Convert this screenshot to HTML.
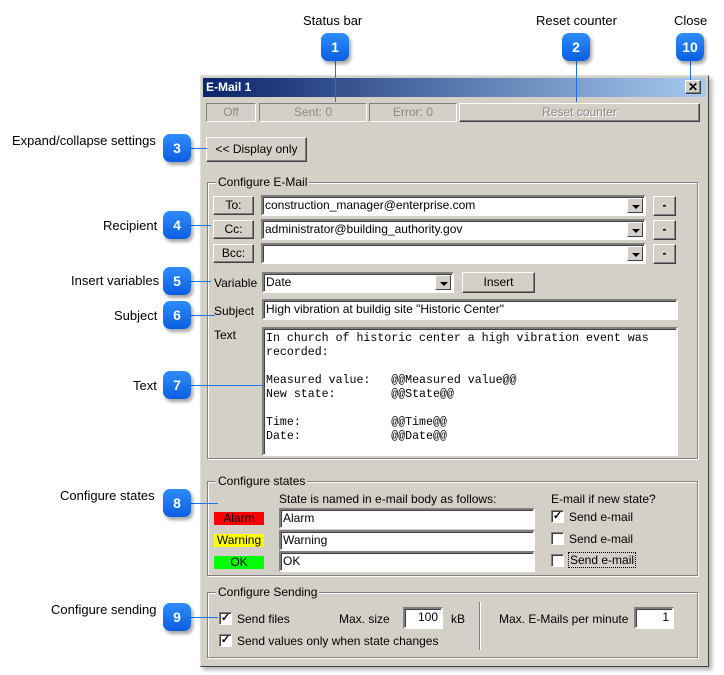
<!DOCTYPE html>
<html><head><style>
*{box-sizing:border-box;margin:0;padding:0}
body{width:724px;height:675px;background:#fff;position:relative;font-family:"Liberation Sans",sans-serif;font-size:12px;color:#000;overflow:hidden}
.a{position:absolute}
.lbl{position:absolute;font-size:13px;color:#000;white-space:nowrap}
.badge{position:absolute;width:28px;height:28px;border-radius:7px;background:linear-gradient(#2f8cff,#0a5fe0);color:#fff;font-weight:bold;font-size:14px;text-align:center;line-height:28px;box-shadow:2px 3px 3px rgba(0,0,0,.35)}
.ln{position:absolute;background:#1a73e8}
.win{position:absolute;left:200px;top:75px;width:509px;height:592px;background:#d4d0c8;border:1px solid;border-color:#dfdfdf #404040 #404040 #dfdfdf;box-shadow:3px 3px 4px rgba(0,0,0,.3)}
.title{position:absolute;left:2px;top:2px;right:2px;height:19px;background:linear-gradient(90deg,#0a246a,#a6caf0);color:#fff;font-weight:bold;font-size:12px;line-height:19px;padding-left:3px}
.btn{position:absolute;background:#d4d0c8;border:1px solid;border-color:#fff #404040 #404040 #fff;box-shadow:inset -1px -1px 0 #808080;text-align:center;font-size:12px}
.dis{color:#8a8a8a;text-shadow:1px 1px 0 #fff}
.sunk{position:absolute;border:1px solid;border-color:#808080 #fff #fff #808080;color:#8a8a8a;text-align:center;font-size:12px}
.inp{position:absolute;background:#fff;border:2px solid;border-color:#808080 #fff #fff #808080;box-shadow:inset 1px 1px 0 #404040;font-size:12px;padding-left:2px;white-space:nowrap;overflow:hidden}
.dd{position:absolute;right:1px;top:1px;width:16px;bottom:1px;background:#d4d0c8;border:1px solid;border-color:#fff #404040 #404040 #fff}
.dd:after{content:"";position:absolute;left:4px;top:6px;border:4px solid transparent;border-top:4px solid #000;border-bottom:0}
.grp{position:absolute;border:1px solid #808080;box-shadow:1px 1px 0 #fff,inset 1px 1px 0 #fff}
.gt{position:absolute;top:-8px;left:8px;background:#d4d0c8;padding:0 2px;font-size:12px}
.cb{position:absolute;width:13px;height:13px;background:#fff;border:1px solid;border-color:#808080 #fff #fff #808080;box-shadow:inset 1px 1px 0 #404040;font-size:11px;line-height:11px;text-align:center;font-weight:bold}
</style></head><body>

<div class="lbl" style="left:303px;top:13px">Status bar</div>
<div class="lbl" style="left:536px;top:13px">Reset counter</div>
<div class="lbl" style="left:674px;top:13px">Close</div>
<div class="lbl" style="left:12px;top:133px">Expand/collapse settings</div>
<div class="lbl" style="left:103px;top:218px">Recipient</div>
<div class="lbl" style="left:71px;top:273px">Insert variables</div>
<div class="lbl" style="left:114px;top:308px">Subject</div>
<div class="lbl" style="left:133px;top:378px">Text</div>
<div class="lbl" style="left:60px;top:488px">Configure states</div>
<div class="lbl" style="left:51px;top:602px">Configure sending</div>

<div class="win">
 <div class="title">E-Mail 1</div>
 <div class="btn" style="left:484px;top:4px;width:16px;height:14px;font-weight:bold;font-size:12px;line-height:12px">✕</div>
 <div class="sunk" style="left:5px;top:27px;width:50px;height:19px;line-height:17px">Off</div>
 <div class="sunk" style="left:58px;top:27px;width:108px;height:19px;line-height:17px">Sent: 0</div>
 <div class="sunk" style="left:168px;top:27px;width:88px;height:19px;line-height:17px">Error: 0</div>
 <div class="btn dis" style="left:258px;top:27px;width:241px;height:19px;line-height:17px">Reset counter</div>
 <div class="btn" style="left:5px;top:61px;width:101px;height:25px;line-height:23px">&lt;&lt; Display only</div>

 <div class="grp" style="left:6px;top:106px;width:491px;height:277px"><div class="gt">Configure E-Mail</div></div>
 <div class="btn" style="left:12px;top:120px;width:41px;height:19px;line-height:17px">To:</div>
 <div class="inp" style="left:60px;top:119px;width:385px;height:21px;line-height:16px">construction_manager@enterprise.com<div class="dd"></div></div>
 <div class="btn" style="left:452px;top:120px;width:23px;height:20px;line-height:16px;font-weight:bold">-</div>
 <div class="btn" style="left:12px;top:144px;width:41px;height:19px;line-height:17px">Cc:</div>
 <div class="inp" style="left:60px;top:143px;width:385px;height:21px;line-height:16px">administrator@building_authority.gov<div class="dd"></div></div>
 <div class="btn" style="left:452px;top:144px;width:23px;height:20px;line-height:16px;font-weight:bold">-</div>
 <div class="btn" style="left:12px;top:168px;width:41px;height:19px;line-height:17px">Bcc:</div>
 <div class="inp" style="left:60px;top:167px;width:385px;height:21px"><div class="dd"></div></div>
 <div class="btn" style="left:452px;top:168px;width:23px;height:20px;line-height:16px;font-weight:bold">-</div>

 <div class="a" style="left:13px;top:200px">Variable</div>
 <div class="inp" style="left:61px;top:196px;width:192px;height:21px;line-height:16px">Date<div class="dd"></div></div>
 <div class="btn" style="left:261px;top:196px;width:73px;height:21px;line-height:19px">Insert</div>
 <div class="a" style="left:13px;top:228px">Subject</div>
 <div class="inp" style="left:61px;top:223px;width:416px;height:21px;line-height:16px">High vibration at buildig site "Historic Center"</div>
 <div class="a" style="left:13px;top:252px">Text</div>
 <div class="inp" style="left:61px;top:251px;width:416px;height:129px;font-family:'Liberation Mono',monospace;font-size:11.6px;line-height:14px;padding-top:3px;white-space:pre">In church of historic center a high vibration event was
recorded:

Measured value:   @@Measured value@@
New state:        @@State@@

Time:             @@Time@@
Date:             @@Date@@</div>

 <div class="grp" style="left:6px;top:405px;width:491px;height:95px"><div class="gt">Configure states</div></div>
 <div class="a" style="left:78px;top:416px">State is named in e-mail body as follows:</div>
 <div class="a" style="left:350px;top:416px">E-mail if new state?</div>
 <div class="a" style="left:13px;top:436px;width:50px;height:13px;background:#f00;text-align:center;line-height:13px">Alarm</div>
 <div class="a" style="left:13px;top:458px;width:50px;height:13px;background:#ff0;text-align:center;line-height:13px">Warning</div>
 <div class="a" style="left:13px;top:480px;width:50px;height:13px;background:#0f0;text-align:center;line-height:13px">OK</div>
 <div class="inp" style="left:78px;top:432px;width:256px;height:21px;line-height:16px">Alarm</div>
 <div class="inp" style="left:78px;top:454px;width:256px;height:21px;line-height:16px">Warning</div>
 <div class="inp" style="left:78px;top:475px;width:256px;height:21px;line-height:16px">OK</div>
 <div class="cb" style="left:350px;top:434px">✓</div><div class="a" style="left:368px;top:434px">Send e-mail</div>
 <div class="cb" style="left:350px;top:456px"></div><div class="a" style="left:368px;top:456px">Send e-mail</div>
 <div class="cb" style="left:350px;top:478px"></div><div class="a" style="left:367px;top:476px;border:1px dotted #000;padding:0 1px">Send e-mail</div>

 <div class="grp" style="left:6px;top:516px;width:491px;height:66px"><div class="gt">Configure Sending</div></div>
 <div class="cb" style="left:18px;top:536px">✓</div><div class="a" style="left:36px;top:536px">Send files</div>
 <div class="a" style="left:138px;top:536px">Max. size</div>
 <div class="inp" style="left:202px;top:531px;width:40px;height:22px;line-height:17px;text-align:right;padding-right:3px">100</div>
 <div class="a" style="left:250px;top:536px">kB</div>
 <div class="cb" style="left:18px;top:558px">✓</div><div class="a" style="left:36px;top:558px">Send values only when state changes</div>
 <div class="a" style="left:278px;top:526px;width:2px;height:48px;border-left:1px solid #808080;border-right:1px solid #fff"></div>
 <div class="a" style="left:298px;top:536px">Max. E-Mails per minute</div>
 <div class="inp" style="left:433px;top:531px;width:40px;height:22px;line-height:17px;text-align:right;padding-right:3px">1</div>
</div>

<div class="ln" style="left:335px;top:60px;width:1px;height:42px"></div>
<div class="ln" style="left:576px;top:60px;width:1px;height:42px"></div>
<div class="ln" style="left:690px;top:60px;width:1px;height:20px"></div>
<div class="ln" style="left:191px;top:148px;width:16px;height:1px"></div>
<div class="ln" style="left:191px;top:225px;width:20px;height:1px"></div>
<div class="ln" style="left:191px;top:281px;width:20px;height:1px"></div>
<div class="ln" style="left:191px;top:315px;width:24px;height:1px"></div>
<div class="ln" style="left:191px;top:385px;width:72px;height:1px"></div>
<div class="ln" style="left:191px;top:503px;width:27px;height:1px"></div>
<div class="ln" style="left:191px;top:617px;width:27px;height:1px"></div>

<div class="badge" style="left:321px;top:33px">1</div>
<div class="badge" style="left:562px;top:33px">2</div>
<div class="badge" style="left:676px;top:33px">10</div>
<div class="badge" style="left:163px;top:134px">3</div>
<div class="badge" style="left:163px;top:211px">4</div>
<div class="badge" style="left:163px;top:267px">5</div>
<div class="badge" style="left:163px;top:301px">6</div>
<div class="badge" style="left:163px;top:371px">7</div>
<div class="badge" style="left:163px;top:489px">8</div>
<div class="badge" style="left:163px;top:603px">9</div>
</body></html>
